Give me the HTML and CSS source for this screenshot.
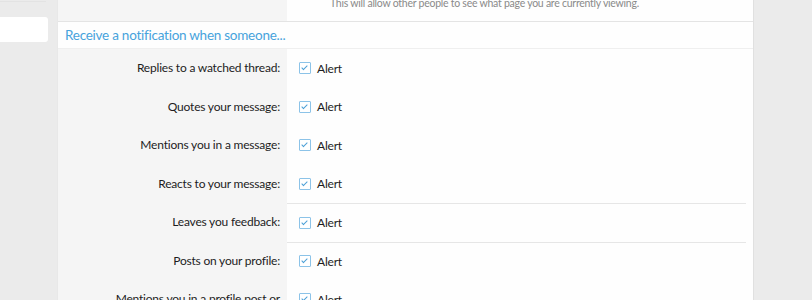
FILE: index.html
```html
<!DOCTYPE html>
<html lang="en">

<head>
  <meta charset="UTF-8">
  <meta name="viewport" content="width=device-width, initial-scale=1.0">
  <title>Preferences</title>
  <link rel="stylesheet" href="styles.css">
</head>

<body>

  <div class="page">
    <div class="side-nav">
      <div class="side-nav__prev"></div>
      <div class="side-nav__item"></div>
    </div>

    <div class="block">
      <div class="form-row form-row_top">
        <div class="form-row__label"></div>
        <div class="form-row__input">
          <span class="form-row__explain">This will allow other people to see what page you are currently viewing.</span>
        </div>
      </div>

      <h3 class="block__header">Receive a notification when someone...</h3>

      <div class="form-row">
        <div class="form-row__label">Replies to a watched thread:</div>
        <div class="form-row__input">
          <label class="check"><span class="check__box"></span>Alert</label>
        </div>
      </div>

      <div class="form-row">
        <div class="form-row__label">Quotes your message:</div>
        <div class="form-row__input">
          <label class="check"><span class="check__box"></span>Alert</label>
        </div>
      </div>

      <div class="form-row">
        <div class="form-row__label">Mentions you in a message:</div>
        <div class="form-row__input">
          <label class="check"><span class="check__box"></span>Alert</label>
        </div>
      </div>

      <div class="form-row">
        <div class="form-row__label">Reacts to your message:</div>
        <div class="form-row__input">
          <label class="check"><span class="check__box"></span>Alert</label>
        </div>
      </div>

      <div class="form-row form-row_separated">
        <div class="form-row__label">Leaves you feedback:</div>
        <div class="form-row__input">
          <label class="check"><span class="check__box"></span>Alert</label>
        </div>
      </div>

      <div class="form-row form-row_separated">
        <div class="form-row__label">Posts on your profile:</div>
        <div class="form-row__input">
          <label class="check"><span class="check__box"></span>Alert</label>
        </div>
      </div>

      <div class="form-row">
        <div class="form-row__label">Mentions you in a profile post or</div>
        <div class="form-row__input">
          <label class="check"><span class="check__box"></span>Alert</label>
        </div>
      </div>
    </div>
  </div>

</body>

</html>
```

FILE: styles.css
```css
body {
  margin: 0;
  background-color: #ebebeb;
  font-family: Lato, "Open Sans", sans-serif;
  font-size: 12px;
  letter-spacing: -0.2px;
  color: #1d1d1d;
  overflow: hidden;
}

.page {
  display: flex;
  align-items: flex-start;
}

.side-nav {
  width: 48px;
  flex-shrink: 0;
}

.side-nav__prev {
  height: 1px;
  margin-top: 1px;
  width: 46px;
  background-color: #e3e3e3;
}

.side-nav__item {
  margin-top: 15px;
  height: 25px;
  background-color: #fff;
  border-radius: 0 3px 3px 0;
}

.block {
  margin-left: 9px;
  width: 695px;
  border-left: 1px solid #e8e8e8;
  border-right: 1px solid #e0e0e0;
  background-color: #fefefe;
}

.block__header {
  margin: 0;
  padding: 0 7px;
  height: 26px;
  line-height: 26px;
  font-size: 13.5px;
  letter-spacing: -0.25px;
  font-weight: normal;
  color: #47a3dc;
  border-top: 1px solid #e4e4e4;
  border-bottom: 1px solid #efefef;
}

.form-row {
  display: flex;
  height: 38.5px;
}

.form-row_top {
  height: 21px;
}

.form-row__label {
  width: 229px;
  flex-shrink: 0;
  box-sizing: border-box;
  padding-right: 7px;
  background-color: #f5f5f5;
  text-align: right;
  line-height: 38.5px;
  white-space: nowrap;
}

.form-row__input {
  flex-grow: 1;
  display: flex;
  align-items: center;
  padding-left: 12px;
  margin-right: 7px;
}

.form-row_separated .form-row__input {
  border-top: 1px solid #e6e6e6;
}

.form-row_top .form-row__input {
  align-items: flex-start;
  padding-left: 43px;
}

.form-row__explain {
  font-size: 10.5px;
  letter-spacing: -0.25px;
  color: #8a8a8a;
  line-height: 13px;
  margin-top: -3px;
}

.check {
  display: flex;
  align-items: center;
  cursor: pointer;
}

.check__box {
  position: relative;
  width: 10px;
  height: 10px;
  margin-right: 6px;
  border: 1px solid #8cc3e8;
  border-radius: 1px;
  background-color: #fff;
}

.check__box::after {
  content: "";
  position: absolute;
  left: 3px;
  top: 1px;
  width: 2px;
  height: 5px;
  border: solid #4b9fd6;
  border-width: 0 1.5px 1.5px 0;
  transform: rotate(45deg);
}
```
